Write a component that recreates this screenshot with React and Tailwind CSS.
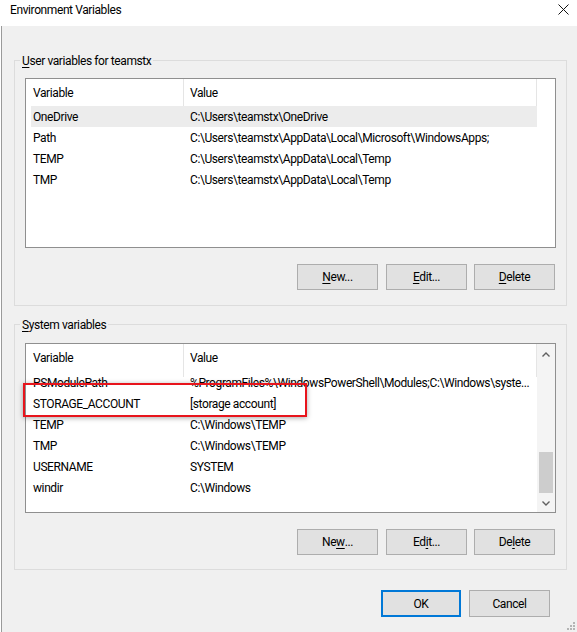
import React from 'react';

const USER_ROWS = [
  ['OneDrive', String.raw`C:\Users\teamstx\OneDrive`],
  ['Path', String.raw`C:\Users\teamstx\AppData\Local\Microsoft\WindowsApps;`],
  ['TEMP', String.raw`C:\Users\teamstx\AppData\Local\Temp`],
  ['TMP', String.raw`C:\Users\teamstx\AppData\Local\Temp`],
];

const SYSTEM_ROWS = [
  ['PSModulePath', String.raw`%ProgramFiles%\WindowsPowerShell\Modules;C:\Windows\syste...`],
  ['STORAGE_ACCOUNT', '[storage account]'],
  ['TEMP', String.raw`C:\Windows\TEMP`],
  ['TMP', String.raw`C:\Windows\TEMP`],
  ['USERNAME', 'SYSTEM'],
  ['windir', String.raw`C:\Windows`],
];

function Chevron({ up }) {
  return (
    <svg width="8" height="5" viewBox="0 0 8 5" fill="none" stroke="#606060" strokeWidth="1.4">
      {up ? <path d="M0.5 4.5L4 1l3.5 3.5" /> : <path d="M0.5 0.5L4 4l3.5-3.5" />}
    </svg>
  );
}

function Acc({ children }) {
  return <span className="underline decoration-1 underline-offset-[2px]">{children}</span>;
}

function Btn({ children, className = '' }) {
  return (
    <button
      type="button"
      className={`flex h-[26px] items-center justify-center border border-[#adadad] bg-[#e1e1e1] text-black ${className}`}
    >
      {children}
    </button>
  );
}

function ListView({ rows, headerH, bodyShift, selected, scroll }) {
  return (
    <div className="flex h-[170px] overflow-hidden border border-[#8f8f8f] bg-white">
      <div className="flex w-[511px] flex-col overflow-hidden">
        <div className={`relative z-10 flex shrink-0 bg-white ${headerH}`}>
          <div className="w-[158px] border-r border-[#e5e5e5] pl-[7px] pt-[4px] leading-[20px]">Variable</div>
          <div className="flex-1 border-r border-[#e5e5e5] pl-[6px] pt-[4px] leading-[20px]">Value</div>
        </div>
        <div className={bodyShift}>
          {rows.map(([name, value], i) => (
            <div
              key={name + i}
              className={`ml-[5px] flex h-[21px] pl-[2px] pt-[2px] leading-[19px] ${i === selected ? 'bg-[#ececec]' : ''}`}
            >
              <div className="w-[157px] shrink-0 whitespace-nowrap">{name}</div>
              <div className="flex-1 whitespace-nowrap">{value}</div>
            </div>
          ))}
        </div>
      </div>
      {scroll ? (
        <div className="flex w-[18px] flex-col bg-[#f4f4f4]">
          <div className="flex h-[17px] items-center justify-center pt-[4px]">
            <Chevron up />
          </div>
          <div className="flex flex-1 flex-col justify-end pb-[2px]">
            <div className="mx-[2px] h-[41px] bg-[#cdcdcd]" />
          </div>
          <div className="flex h-[17px] items-center justify-center">
            <Chevron />
          </div>
        </div>
      ) : (
        <div className="w-[18px]" />
      )}
    </div>
  );
}

function Group({ label, children, className = '' }) {
  return (
    <div className={`relative border border-[#dcdcdc] pl-[10px] pr-[10px] ${className}`}>
      <span className="absolute left-[5px] top-[-9px] bg-[#f0f0f0] px-[2px] leading-[18px]">{label}</span>
      {children}
    </div>
  );
}

function GroupButtons({ n, e, d }) {
  return (
    <div className="mt-[16px] flex justify-end pr-[1px]">
      <Btn className="w-[81px]">{n}</Btn>
      <Btn className="ml-[8px] w-[81px]">{e}</Btn>
      <Btn className="ml-[7px] w-[81px]">{d}</Btn>
    </div>
  );
}

export default function App() {
  return (
    <div className="flex h-[632px] w-[577px] flex-col overflow-hidden bg-white font-['Roboto','Liberation_Sans',sans-serif] text-[12px] tracking-[-0.4px] text-black">
      <div className="flex h-[26px] shrink-0 items-start justify-between pl-[10px] pr-[8px]">
        <span className="leading-[20px]">Environment Variables</span>
        <svg className="mt-[4px]" width="11" height="11" viewBox="0 0 11 11" stroke="#111" strokeWidth="1">
          <path d="M0.5 0.5l10 10M10.5 0.5l-10 10" />
        </svg>
      </div>

      <div className="relative ml-[1px] flex flex-1 flex-col border-l border-[#9a9a9a] bg-[#f0f0f0] pl-[12px] pr-[10px] pt-[34px]">
        <Group label={<><Acc>U</Acc>ser variables for teamstx</>} className="pt-[17px] pb-[15px]">
          <ListView rows={USER_ROWS} headerH="h-[27px]" bodyShift="" selected={0} />
          <GroupButtons
            n={<><Acc>N</Acc>ew...</>}
            e={<><Acc>E</Acc>dit...</>}
            d={<><Acc>D</Acc>elete</>}
          />
        </Group>

        <Group label={<><Acc>S</Acc>ystem variables</>} className="mt-[18px] pt-[18px] pb-[14px]">
          <div className="relative">
            <ListView rows={SYSTEM_ROWS} headerH="h-[33px]" bodyShift="-mt-[5px]" scroll />
            <div className="absolute left-[-2px] top-[40px] h-[34px] w-[284px] border-2 border-[#e8141c] shadow-[0_1px_5px_rgba(0,0,0,0.35)]" />
          </div>
          <GroupButtons
            n={<>Ne<Acc>w</Acc>...</>}
            e={<>Ed<Acc>i</Acc>t...</>}
            d={<>De<Acc>l</Acc>ete</>}
          />
        </Group>

        <div className="mt-[20px] flex justify-end pr-[17px]">
          <button
            type="button"
            className="flex h-[27px] w-[80px] items-center justify-center border-2 border-[#0078d7] bg-[#e1e1e1]"
          >
            OK
          </button>
          <button
            type="button"
            className="ml-[8px] flex h-[27px] w-[81px] items-center justify-center border border-[#adadad] bg-[#e1e1e1]"
          >
            Cancel
          </button>
        </div>

        <svg className="absolute bottom-[2px] right-[2px]" width="8" height="8" viewBox="0 0 8 8" fill="#b4b4b4">
          <rect x="6" y="0" width="2" height="2" />
          <rect x="6" y="3" width="2" height="2" />
          <rect x="3" y="3" width="2" height="2" />
          <rect x="6" y="6" width="2" height="2" />
          <rect x="3" y="6" width="2" height="2" />
          <rect x="0" y="6" width="2" height="2" />
        </svg>
      </div>
    </div>
  );
}
